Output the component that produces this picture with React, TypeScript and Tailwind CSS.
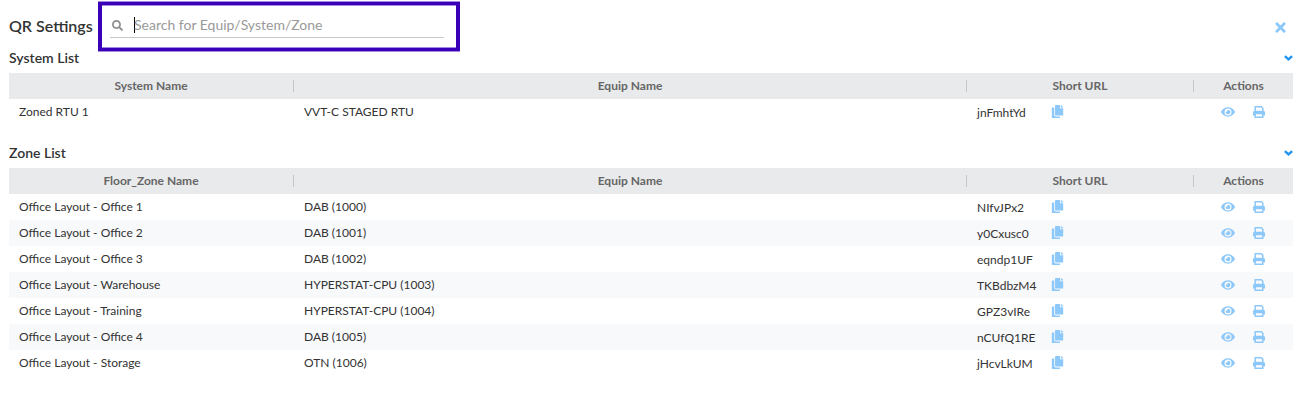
import { useState } from 'react';
import { FaCopy, FaEye, FaSearch, FaTimes } from 'react-icons/fa';

interface Row {
  name: string;
  equip: string;
  url: string;
}

interface SectionProps {
  title: string;
  nameLabel: string;
  rows: Row[];
}

const systems: Row[] = [{ name: 'Zoned RTU 1', equip: 'VVT-C STAGED RTU', url: 'jnFmhtYd' }];

const zones: Row[] = [
  { name: 'Office Layout - Office 1', equip: 'DAB (1000)', url: 'NIfvJPx2' },
  { name: 'Office Layout - Office 2', equip: 'DAB (1001)', url: 'y0Cxusc0' },
  { name: 'Office Layout - Office 3', equip: 'DAB (1002)', url: 'eqndp1UF' },
  { name: 'Office Layout - Warehouse', equip: 'HYPERSTAT-CPU (1003)', url: 'TKBdbzM4' },
  { name: 'Office Layout - Training', equip: 'HYPERSTAT-CPU (1004)', url: 'GPZ3vIRe' },
  { name: 'Office Layout - Office 4', equip: 'DAB (1005)', url: 'nCUfQ1RE' },
  { name: 'Office Layout - Storage', equip: 'OTN (1006)', url: 'jHcvLkUM' },
];

function ChevronIcon() {
  return (
    <svg width="9" height="6" viewBox="0 0 9 6" fill="none" stroke="currentColor" strokeWidth="2.4" aria-hidden="true">
      <path d="M0.9 1.1 4.5 4.3 8.1 1.1" />
    </svg>
  );
}

function PrintIcon() {
  return (
    <svg width="12" height="12" viewBox="0 0 12 12" fill="none" stroke="currentColor" strokeWidth="1.5" aria-hidden="true">
      <path d="M2.2 5.5V0.8h6.2L9.8 2.2V5.5" />
      <path d="M0 9.4V6.4Q0 4.8 1.6 4.8h8.8Q12 4.8 12 6.4V9.4H9.6V7.4H2.4V9.4Z" fill="currentColor" stroke="none" />
      <path d="M2.2 7.4h7.6v3.8H2.2z" />
    </svg>
  );
}

function HeaderCell({ label, last = false }: { label: string; last?: boolean }) {
  return (
    <th scope="col" className="h-[26px] p-0 font-bold">
      <div className={last ? 'h-3 leading-3' : 'h-3 border-r border-[#c4c6c9] leading-3'}>{label}</div>
    </th>
  );
}

function Section({ title, nameLabel, rows }: SectionProps) {
  const [open, setOpen] = useState(true);

  return (
    <section className="mb-5">
      <div className="mb-2 flex h-[15px] items-center justify-between">
        <h2 className="text-[14px] leading-4 font-semibold text-[#333333]">{title}</h2>
        <button
          type="button"
          aria-label={`Toggle ${title}`}
          aria-expanded={open}
          onClick={() => setOpen(!open)}
          className="text-[#2196f3]"
        >
          <ChevronIcon />
        </button>
      </div>
      {open && (
        <table className="w-full table-fixed border-collapse text-[12px] leading-4 text-[#333333]">
          <colgroup>
            <col className="w-[285px]" />
            <col />
            <col className="w-[227px]" />
            <col className="w-[99px]" />
          </colgroup>
          <thead className="bg-[#e9eaec] text-[#666666]">
            <tr>
              <HeaderCell label={nameLabel} />
              <HeaderCell label="Equip Name" />
              <HeaderCell label="Short URL" />
              <HeaderCell label="Actions" last />
            </tr>
          </thead>
          <tbody>
            {rows.map(row => (
              <tr key={row.url} className="even:bg-[#f8f9fb]">
                <td className="h-[26px] px-2.5 py-0">{row.name}</td>
                <td className="px-2.5 py-0">{row.equip}</td>
                <td className="px-2.5 py-0">
                  <div className="flex items-center">
                    <span className="w-[74px] pt-0.5">{row.url}</span>
                    <button type="button" aria-label={`Copy ${row.url}`} className="pb-px text-[#8cc8fa]">
                      <FaCopy size={13} />
                    </button>
                  </div>
                </td>
                <td className="p-0">
                  <div className="flex items-center justify-center gap-[18px] pr-0.5 text-[#8cc8fa]">
                    <button type="button" aria-label={`View ${row.name}`}>
                      <FaEye size={14} />
                    </button>
                    <button type="button" aria-label={`Print ${row.name}`}>
                      <PrintIcon />
                    </button>
                  </div>
                </td>
              </tr>
            ))}
          </tbody>
        </table>
      )}
    </section>
  );
}

export default function App() {
  const [query, setQuery] = useState('');
  const matches = (row: Row) =>
    `${row.name} ${row.equip}`.toLowerCase().includes(query.toLowerCase());

  return (
    <main className="bg-white pt-0.5 pr-[11px] pl-[9px] font-['Lato',sans-serif]">
      <header className="flex h-12 items-start">
        <h1 className="w-[89px] pt-3.5 text-[16px] leading-5 font-semibold whitespace-nowrap text-[#333333]">
          QR Settings
        </h1>
        <div className="h-[49px] w-[362px] border-x-4 border-y-[3px] border-[#3a00b8] pt-2 pr-3 pl-2 shadow-[0_1px_0_#a688e0,0_-1px_0_#a688e0,inset_0_1px_0_#a688e0,inset_0_-1px_0_#a688e0]">
          <label className="flex h-[25px] items-center border-b border-[#c8c8c8]">
            <FaSearch size={11} className="ml-0.5 text-[#8f8f8f]" />
            <span className="ml-[11px] h-4 w-px bg-black" />
            <input
              type="text"
              aria-label="Search"
              value={query}
              onChange={e => setQuery(e.target.value)}
              placeholder="Search for Equip/System/Zone"
              className="-ml-px min-w-0 flex-1 bg-transparent text-[14px] leading-5 text-[#333333] outline-none placeholder:text-[#999999]"
            />
          </label>
        </div>
        <button type="button" aria-label="Close" className="mr-[5px] ml-auto pt-[18px] text-[#8cc8fa]">
          <FaTimes size={15} />
        </button>
      </header>
      <Section title="System List" nameLabel="System Name" rows={systems.filter(matches)} />
      <Section title="Zone List" nameLabel="Floor_Zone Name" rows={zones.filter(matches)} />
    </main>
  );
}
